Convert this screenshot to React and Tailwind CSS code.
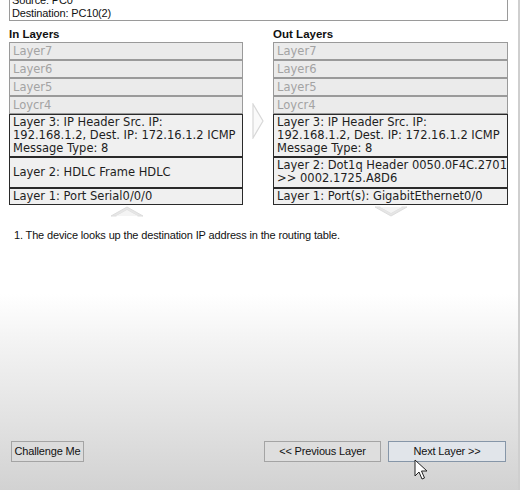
import React from "react";

const sans = { fontFamily: '"Liberation Sans", Arial, sans-serif' };

function GrayBox({ children }) {
  return (
    <div className="h-[18px] border border-[#9a9a9a] bg-[#ebebeb] pl-[3px] text-[11.5px] leading-[16px] text-[#a3a3a3]">
      {children}
    </div>
  );
}

function DarkBox({ children, h }) {
  return (
    <div
      className={`whitespace-nowrap border border-[#2a2a2a] bg-[#f0f0f0] pl-[3px] pt-[1px] text-[11.5px] leading-[13px] text-[#1e1e1e] ${h}`}
    >
      {children}
    </div>
  );
}

function Column({ title, l3, l2, l1, l2pt }) {
  return (
    <div className="flex w-[235px] flex-col" style={{ fontFamily: '"DejaVu Sans", Verdana, sans-serif' }}>
      <div
        className="mb-[1px] text-[11.5px] font-bold leading-[13px] text-[#111]"
        style={sans}
      >
        {title}
      </div>
      <GrayBox>Layer7</GrayBox>
      <GrayBox>Layer6</GrayBox>
      <GrayBox>Layer5</GrayBox>
      <GrayBox>Loycr4</GrayBox>
      <DarkBox h="h-[43px]">{l3}</DarkBox>
      <div className={`h-[31px] whitespace-nowrap border border-[#2a2a2a] bg-[#f0f0f0] pl-[3px] text-[11.5px] leading-[13px] text-[#1e1e1e] ${l2pt}`}>
        {l2}
      </div>
      <div className="h-[17px] whitespace-nowrap border border-[#2a2a2a] bg-[#f0f0f0] pl-[3px] text-[11.5px] leading-[15px] text-[#1e1e1e]">
        {l1}
      </div>
    </div>
  );
}

export default function App() {
  return (
    <div
      className="relative flex h-[490px] w-[520px] flex-col overflow-hidden border-r-2 border-[#cfcfcf] pl-[9px] pr-[10px]"
      style={{
        background:
          "linear-gradient(to bottom, #ffffff 0%, #ffffff 60%, #f3f3f3 70%, #e4e4e4 84%, #d2d2d2 100%)",
      }}
    >
      {/* top info box */}
      <div
        className="-mt-[7px] w-[499px] border border-[#9a9a9a] bg-white pl-[2px] text-[11px] leading-[13px] tracking-[-0.15px] text-[#111]"
        style={sans}
      >
        <div>Source: PC0</div>
        <div>Destination: PC10(2)</div>
      </div>

      {/* columns */}
      <div className="mt-[7px] flex">
        <Column
          title="In Layers"
          l3={
            <>
              Layer 3: IP Header Src. IP:
              <br />
              192.168.1.2, Dest. IP: 172.16.1.2 ICMP
              <br />
              Message Type: 8
            </>
          }
          l2="Layer 2: HDLC Frame HDLC"
          l2pt="pt-[8px]"
          l1="Layer 1: Port Serial0/0/0"
        />
        <div className="flex w-[30px] flex-col items-center pt-[75px]">
          <svg width="14" height="36" viewBox="0 0 14 36">
            <path d="M2 1 L12 18 L2 35 Z" fill="#fafafa" stroke="#d8d8d8" strokeWidth="1.2" />
          </svg>
        </div>
        <Column
          title="Out Layers"
          l3={
            <>
              Layer 3: IP Header Src. IP:
              <br />
              192.168.1.2, Dest. IP: 172.16.1.2 ICMP
              <br />
              Message Type: 8
            </>
          }
          l2={
            <>
              Layer 2: Dot1q Header 0050.0F4C.2701
              <br />
              &gt;&gt; 0002.1725.A8D6
            </>
          }
          l2pt="pt-[1px]"
          l1="Layer 1: Port(s): GigabitEthernet0/0"
        />
      </div>

      {/* up / down arrows */}
      <div className="flex h-[13px]">
        <div className="flex w-[235px] justify-center">
          <svg width="34" height="12" viewBox="0 0 34 12">
            <path d="M1 11 L17 2 L33 11 L28 11 L17 5 L6 11 Z" fill="#e6e6e6" stroke="#dddddd" strokeWidth="1" />
            <path d="M6 11 L17 5 L28 11 Z" fill="#f4f4f4" />
          </svg>
        </div>
        <div className="w-[30px]" />
        <div className="flex w-[234px] justify-center pt-[1px]">
          <svg width="34" height="12" viewBox="0 0 34 12">
            <path d="M1 1 L17 10 L33 1 L28 1 L17 7 L6 1 Z" fill="#e6e6e6" stroke="#dddddd" strokeWidth="1" />
            <path d="M6 1 L17 7 L28 1 Z" fill="#f4f4f4" />
          </svg>
        </div>
      </div>

      {/* description */}
      <div
        className="mt-[11px] pl-[5px] text-[11px] leading-[13px] tracking-[-0.15px] text-[#111]"
        style={sans}
      >
        1. The device looks up the destination IP address in the routing table.
      </div>

      <div className="flex-1" />

      {/* buttons */}
      <div className="mb-[28px] flex items-center text-[11px] tracking-[-0.15px] text-[#111]" style={sans}>
        <button className="ml-[2px] h-[21px] w-[73px] border border-[#a4a4a4] bg-[#dcdcdc] leading-[19px]">
          Challenge Me
        </button>
        <div className="flex-1" />
        <button className="h-[21px] w-[117px] border border-[#a4a4a4] bg-[#dedede] leading-[19px]">
          &lt;&lt; Previous Layer
        </button>
        <button className="ml-[7px] mr-[2px] h-[21px] w-[118px] border border-[#8696a8] bg-[#e1e5ea] leading-[19px]">
          Next Layer &gt;&gt;
        </button>
      </div>

      {/* mouse cursor */}
      <svg
        className="absolute left-[414px] top-[459px]"
        width="14"
        height="22"
        viewBox="0 0 14 22"
      >
        <path
          d="M1 1 L1 17 L5 13 L8 20 L10.5 19 L7.5 12 L13 12 Z"
          fill="#ffffff"
          stroke="#222222"
          strokeWidth="1"
          strokeLinejoin="round"
        />
      </svg>
    </div>
  );
}
